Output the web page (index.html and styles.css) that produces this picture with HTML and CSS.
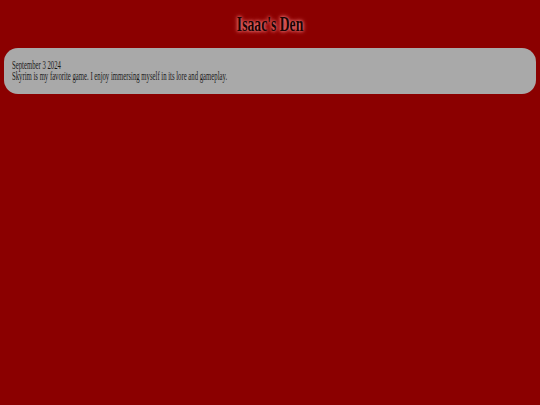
FILE: index.html
```html
<!DOCTYPE html>
<html>
<head>
<meta charset="utf-8">
<link rel="stylesheet" href="styles.css">
</head>
<body>
<header class="header"><h1 class="title"><span class="squish">Isaac's Den</span></h1></header>
<main class="posts">
  <article class="post">
    <div class="line"><span class="squish">September 3 2024</span></div>
    <div class="line"><span class="squish">Skyrim is my favorite game. I enjoy immersing myself in its lore and gameplay.</span></div>
  </article>
</main>
</body>
</html>
```
FILE: styles.css
```css
html, body {
  margin: 0;
  padding: 0;
  background: #8b0000;
  font-family: "Liberation Serif", "Times New Roman", serif;
}
body {
  padding: 0 4px;
}
.header {
  height: 48px;
  display: flex;
  align-items: center;
  justify-content: center;
}
.title {
  margin: 0;
  font-size: 21px;
  font-weight: bold;
  color: #1a0303;
  text-shadow: 0 0 4px #ff9090, 0 0 7px #ff7070;
  line-height: 21px;
}
.title .squish {
  display: inline-block;
  transform: scaleX(0.65);
  transform-origin: center;
}
.post {
  background: #a9a9a9;
  border-radius: 14px;
  height: 46px;
  box-sizing: border-box;
  padding: 12px 8px 0 8px;
  color: #1a1a1a;
  font-size: 12px;
  line-height: 11px;
}
.line {
  height: 11px;
}
.line .squish {
  display: inline-block;
  white-space: nowrap;
  transform: scaleX(0.56);
  transform-origin: left;
}
```
